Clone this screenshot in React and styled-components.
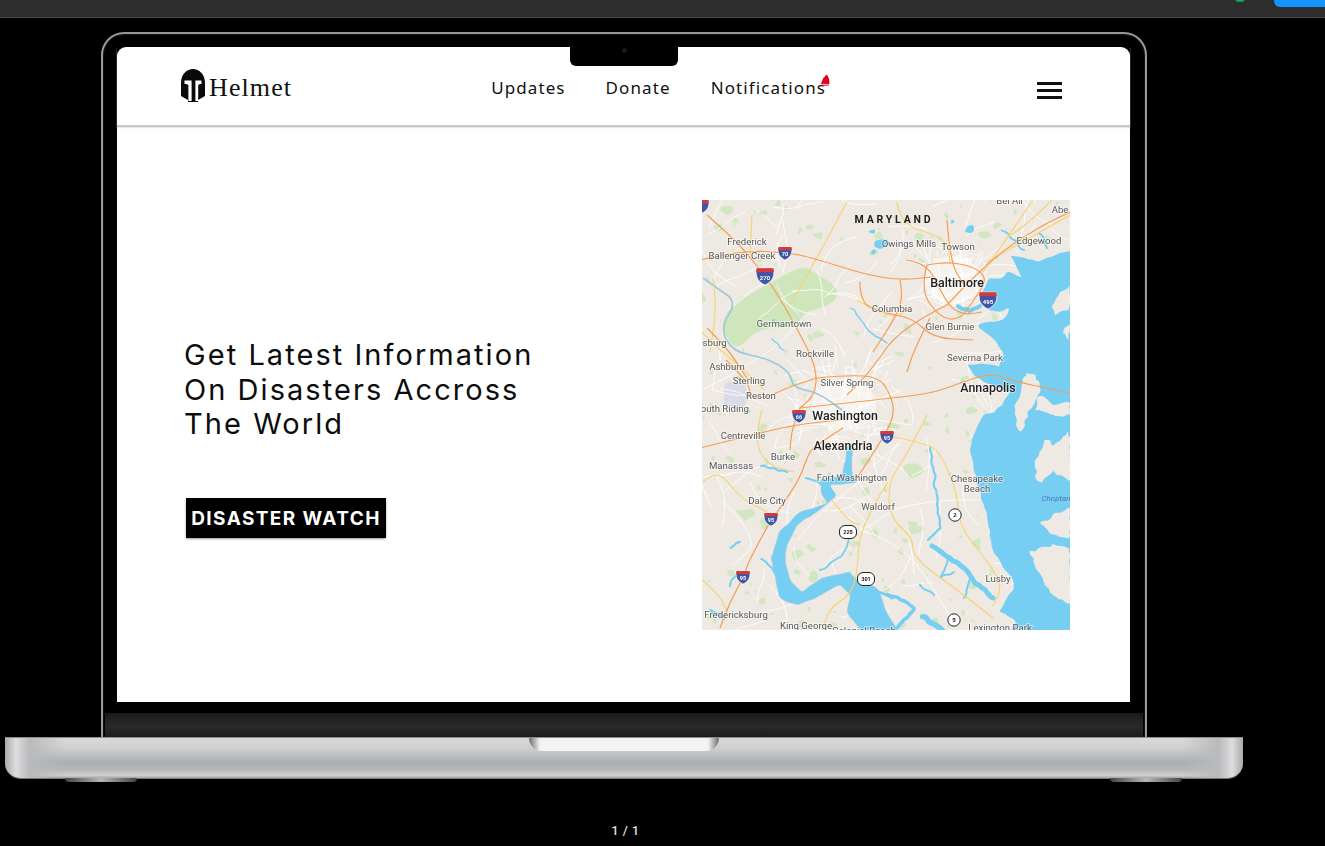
import React from "react";
import styled, { createGlobalStyle } from "styled-components";

const GlobalStyle = createGlobalStyle`
    html, body {
        margin: 0;
        padding: 0;
        background: #000000;
    }
    * {
        box-sizing: border-box;
    }
`;

const Page = styled.div`
    width: 1325px;
    height: 846px;
    overflow: hidden;
    background: #000000;
`;
const TopBar = styled.div`
    display: flex;
    justify-content: flex-end;
    align-items: flex-start;
    height: 18px;
    overflow: hidden;
    background: #2d2d2d;
    border-bottom: 1px solid #4d4d4d;
`;
const StatusDot = styled.span`
    width: 16px;
    height: 16px;
    margin: -14px 26px 0 0;
    border-radius: 50%;
    background: #18a957;
`;
const ShareButton = styled.span`
    width: 51px;
    height: 7px;
    border-radius: 0 0 0 6px;
    background: #1493ff;
`;
const Lid = styled.div`
    display: flex;
    flex-direction: column;
    width: 1046px;
    height: 706px;
    margin: 14px 0 0 101px;
    background: #000000;
    border: 2px solid #989898;
    border-bottom: 0;
    border-radius: 23px 23px 0 0;
    box-shadow: inset 0 0 2px #444444;
`;
const Screen = styled.div`
    position: relative;
    width: 1013px;
    height: 655px;
    margin: 13px 0 0 14px;
    background: #ffffff;
    border-radius: 9px 9px 0 0;
`;
const Notch = styled.div`
    position: absolute;
    top: 0;
    left: 453px;
    display: flex;
    justify-content: center;
    padding-top: 1px;
    width: 108px;
    height: 19px;
    background: #000000;
    border-radius: 0 0 6px 6px;
`;
const Camera = styled.span`
    width: 5px;
    height: 5px;
    border-radius: 50%;
    background: #0c1c2c;
`;
const Chin = styled.div`
    height: 24px;
    margin: 11px 2px 0;
    background: linear-gradient(#1a1a1a, #2a2a2a 55%, #1c1c1c);
`;
const Header = styled.header`
    display: flex;
    align-items: center;
    height: 80px;
    padding: 3px 68px 0 64px;
    border-bottom: 2px solid #c9c9c9;
    box-shadow: 0 1px 1px #e6e6e6;
`;
const Logo = styled.div`
    display: flex;
    align-items: center;
    gap: 4px;
    font-family: "Liberation Serif", serif;
    font-size: 26px;
    letter-spacing: 1.1px;
    color: #111111;
`;
const LogoMark = styled.svg`
    flex: none;
    width: 24px;
    height: 33px;
    margin-top: -5px;
`;
const Nav = styled.nav`
    display: flex;
    gap: 40px;
    margin-left: 199px;
    font-family: "Noto Sans", sans-serif;
    font-size: 17px;
    letter-spacing: 1.1px;
    color: #111111;
`;
const NavItem = styled.a`
    position: relative;
    display: block;
`;
const BellBadge = styled.svg`
    position: absolute;
    top: -1px;
    right: -4px;
    width: 10px;
    height: 11px;
`;
const MenuButton = styled.button`
    display: flex;
    flex-direction: column;
    gap: 4px;
    width: 25px;
    margin: 5px 0 0 auto;
    padding: 0;
    border: 0;
    background: none;
`;
const MenuLine = styled.span`
    display: block;
    height: 3px;
    background: #111111;
`;
const Hero = styled.section`
    display: flex;
    justify-content: space-between;
    align-items: flex-start;
    padding: 73px 60px 0 67px;
`;
const Intro = styled.div`
    padding-top: 138px;
`;
const Title = styled.h1`
    width: 400px;
    margin: 0 0 56px;
    font-family: "Inter", sans-serif;
    font-size: 29px;
    font-weight: 400;
    line-height: 34.5px;
    letter-spacing: 2.05px;
    color: #0c0c0c;
`;
const WatchButton = styled.a`
    display: flex;
    justify-content: center;
    align-items: center;
    width: 200px;
    height: 40px;
    margin-left: 2px;
    padding-top: 1px;
    background: #000000;
    box-shadow: 0 1px 2px #9a9a9a;
    font-family: "Inter", sans-serif;
    font-size: 19px;
    font-weight: 700;
    letter-spacing: 1.4px;
    color: #ffffff;
`;
const MapFrame = styled.svg`
    display: block;
    width: 368px;
    height: 430px;
    background: #efe9e3;
    filter: blur(0.3px);
`;
const MapLabel = styled.text`
    font-family: "Roboto", sans-serif;
    font-size: ${(p) => (p.$major ? "12.4px" : "9.6px")};
    font-weight: ${(p) => (p.$major ? 500 : 400)};
    fill: ${(p) => (p.$major ? "#222222" : "#585858")};
    text-anchor: middle;
    stroke: #ffffff;
    stroke-width: 2px;
    stroke-opacity: 0.5;
    paint-order: stroke;
`;
const RegionLabel = styled.text`
    font-family: "Roboto", sans-serif;
    font-size: 10.5px;
    font-weight: 700;
    letter-spacing: 2.8px;
    fill: #1c1c1c;
    text-anchor: middle;
`;
const WaterLabel = styled.text`
    font-family: "Roboto", sans-serif;
    font-size: 8px;
    font-style: italic;
    fill: #4a78c0;
    text-anchor: middle;
`;
const ShieldNumber = styled.text`
    font-family: "Roboto", sans-serif;
    font-size: ${(p) => p.$size || 5.5}px;
    font-weight: 700;
    fill: ${(p) => p.$color || "#ffffff"};
    text-anchor: middle;
`;
const Base = styled.div`
    position: relative;
    display: flex;
    justify-content: center;
    width: 1238px;
    height: 42px;
    margin: -1px 0 0 5px;
    border-radius: 0 0 16px 16px;
    border-top: 1px solid #8d8d8d;
    border-bottom: 1px solid #77777a;
    background:
        linear-gradient(90deg, #a9aaac 0, #dedee0 11px, #b9babc 24px, transparent 60px, transparent calc(100% - 60px), #b9babc calc(100% - 24px), #dedee0 calc(100% - 11px), #a9aaac 100%),
        linear-gradient(#d8d9db 0, #cfd0d2 25%, #adaeb1 60%, #b6b7b9 80%, #cfcfd1 93%, #a8a8aa 100%);
`;
const Thumb = styled.div`
    width: 190px;
    height: 13px;
    border-radius: 0 0 13px 13px;
    background: linear-gradient(90deg, #6f6f70, #f3f3f3 11px, #f3f3f3 calc(100% - 11px), #6f6f70);
`;
const Foot = styled.span`
    position: absolute;
    top: 40px;
    left: ${(p) => p.$left}px;
    width: 72px;
    height: 4px;
    border-radius: 0 0 8px 8px;
    background: linear-gradient(90deg, #444444, #b8b8b8 50%, #444444);
`;
const Pager = styled.div`
    height: 16px;
    margin-top: 44px;
    padding-right: 74px;
    text-align: center;
    font-family: "Roboto", sans-serif;
    font-size: 13px;
    font-weight: 500;
    line-height: 16px;
    letter-spacing: 0.4px;
    color: #dddddd;
`;

// map helpers: small seeded noise so the same map is drawn every time
let seed = 7;
const rnd = () => {
    seed = (seed * 9301 + 49297) % 233280;
    return seed / 233280;
};
const toPoints = (s) => {
    const n = s.trim().split(/\s+/).map(Number);
    const out = [];
    for (let i = 0; i < n.length; i += 2) out.push([n[i], n[i + 1]]);
    return out;
};
const curve = (pts, closed) => {
    const mid = (a, b) => [(a[0] + b[0]) / 2, (a[1] + b[1]) / 2];
    if (closed) {
        const start = mid(pts[pts.length - 1], pts[0]);
        let d = `M${start[0]} ${start[1]}`;
        pts.forEach((p, i) => {
            const m = mid(p, pts[(i + 1) % pts.length]);
            d += ` Q${p[0]} ${p[1]} ${m[0]} ${m[1]}`;
        });
        return d + " Z";
    }
    let d = `M${pts[0][0]} ${pts[0][1]}`;
    for (let i = 1; i < pts.length - 1; i++) {
        const m = mid(pts[i], pts[i + 1]);
        d += ` Q${pts[i][0]} ${pts[i][1]} ${m[0]} ${m[1]}`;
    }
    const last = pts[pts.length - 1];
    return d + ` L${last[0]} ${last[1]}`;
};
const jagged = (pts, amp, step, open) => {
    const out = [];
    pts.forEach((p, i) => {
        if (open && i === pts.length - 1) return;
        const q = pts[(i + 1) % pts.length];
        const parts = Math.max(1, Math.round(Math.hypot(q[0] - p[0], q[1] - p[1]) / step));
        for (let k = 0; k < parts; k++) {
            const t = k / parts;
            out.push([p[0] + (q[0] - p[0]) * t + (rnd() - 0.5) * amp, p[1] + (q[1] - p[1]) * t + (rnd() - 0.5) * amp]);
        }
    });
    if (open) out.push(pts[pts.length - 1]);
    return out;
};
const blob = (cx, cy, r) => {
    const pts = [];
    const stretch = 0.5 + rnd();
    for (let i = 0; i < 7; i++) {
        const a = (i / 7) * Math.PI * 2;
        const rr = r * (0.35 + rnd() * 1.1);
        pts.push([cx + Math.cos(a) * rr * stretch, cy + Math.sin(a) * rr]);
    }
    return curve(pts, true);
};
const wander = (x, y, parts, len) => {
    const pts = [[x, y]];
    let a = rnd() * Math.PI * 2;
    for (let i = 0; i < parts; i++) {
        a += (rnd() - 0.5) * 1.2;
        pts.push([pts[i][0] + Math.cos(a) * len, pts[i][1] + Math.sin(a) * len]);
    }
    return curve(pts);
};

const labels = [
    ["Bel Air", 308, 4], ["Abe", 358, 13], ["Ballenger Creek", 40, 59], ["Owings Mills", 207, 47],
    ["Towson", 256, 50], ["Edgewood", 337, 44], ["Columbia", 190, 112], ["Germantown", 82, 127],
    ["Glen Burnie", 248, 130], ["Leesburg", 5, 146], ["Rockville", 113, 157], ["Severna Park", 273, 161],
    ["Ashburn", 25, 170], ["Sterling", 47, 184], ["Silver Spring", 145, 186], ["Reston", 59, 199],
    ["South Riding", 20, 212], ["Centreville", 41, 239], ["Burke", 81, 260], ["Manassas", 29, 269],
    ["Fort Washington", 150, 281], ["Chesapeake", 275, 282], ["Beach", 275, 292], ["Frederick", 45, 45],
    ["Dale City", 65, 304], ["Waldorf", 176, 310], ["Lusby", 296, 382], ["Fredericksburg", 34, 418],
    ["King George", 104, 429], ["Colonial Beach", 162, 434], ["Lexington Park", 298, 431],
];
const majorLabels = [
    ["Baltimore", 255, 87], ["Annapolis", 286, 192], ["Washington", 143, 220], ["Alexandria", 141, 250],
];
const interstates = [
    ["", 0, 6, 1], ["70", 83, 53, 1], ["270", 63, 76, 1.3], ["495", 286, 100, 1.3], ["66", 97, 216, 1],
    ["95", 185, 237, 1], ["95", 69, 319, 1], ["95", 41, 377, 1],
];
const stateRoutes = [["2", 253, 315], ["5", 252, 420]];
const usRoutes = [["225", 146, 332], ["301", 164, 379]];

const park = "18 128 28 105 65 85 101 65 111 72 138 88 131 105 101 112 95 128 55 128 35 152";
const potomac = "145 245 141 275 118 280 120 295 126 303 98 312 78 332 69 358 78 398 95 405 115 397 138 385 148 395 145 412 158 430 195 430 185 412 175 388 155 380 147 372 120 378 100 392 88 380 83 358 85 345 95 325 120 308 135 295 128 285 150 283 155 282 150 275 150 245";
const bay = "368 50 345 58 335 62 322 58 308 56 314 66 320 78 305 72 298 80 286 78 281 88 278 100 283 108 296 112 308 108 300 120 275 124 285 134 294 142 301 155 298 168 283 163 265 165 272 175 283 183 300 190 309 192 300 205 292 212 281 215 272 235 268 250 272 270 277 290 284 312 288 335 292 355 305 372 313 385 305 400 298 412 315 422 300 440 380 440 380 50";
const islands = [
    "368 86 360 90 350 106 352 114 362 112 368 108",
    "368 122 362 132 368 140",
    "325 172 318 190 312 212 316 232 322 226 326 212 336 196 352 204 368 202 368 216 346 214 332 210 340 188 332 176",
    "332 262 345 238 352 246 368 232 368 282 352 272 336 284",
    "338 322 352 316 368 308 368 338 350 336",
    "328 352 351 345 368 348 368 405 351 395 332 362",
];
const orangeRoads = [
    "5 15 31 38 48 57 70 85 95 128 115 168 113 195 98 208",
    "-2 60 41 50 88 53 111 58 165 75 198 80 231 77",
    "245 105 285 62 335 28 368 12",
    "245 105 198 128 168 172 145 195",
    "198 80 201 95 195 115 171 152",
    "158 82 158 102 178 112 211 118 231 138 271 140",
    "98 208 191 198 231 193 261 182 288 173 315 182 368 193",
    "115 178 145 175 178 177 190 198 192 215 183 235 155 278",
    "68 322 48 358 41 378 28 402 18 428",
    "68 322 95 285 105 258 110 248 141 228",
    "-2 248 38 238 91 225 138 220",
    "225 65 218 90 238 118 258 120 272 100 286 78 270 66 245 62 225 65",
    "204 60 226 62 245 105 262 115 280 112",
    "98 208 90 228 88 250",
    "45 195 60 200 84 188 115 178",
    "24 160 50 185 45 200",
    "5 128 15 138 30 155 46 180",
    "245 20 248 62 262 85",
    "228 118 212 150 205 172",
];
const yellowRoads = [
    "181 235 228 243 241 258 255 292 258 328 281 355 301 385 291 406",
    "225 215 205 255 186 282 188 318 211 338 211 358 258 392 291 418",
    "186 282 158 325 155 375 148 395 128 408 121 428",
    "-2 378 18 395 25 412", "1 282 15 268 38 298 65 312",
    "145 2 115 58 88 105", "195 2 198 25 245 38 248 62",
    "331 0 305 38 281 72", "368 15 285 62", "50 15 48 57", "11 78 15 105 8 152",
    "155 100 190 120 205 110", "60 210 52 240 65 265 92 272",
    "350 0 330 20 305 38", "130 300 145 320 158 325", "-2 130 12 145 40 168 62 190",
];
const cityLines = [
    "100 170 170 200", "110 195 180 165", "120 160 130 205", "150 160 160 215", "140 215 85 160",
    "140 215 170 150", "140 215 200 190", "140 215 210 225", "230 60 270 60", "225 75 275 75",
    "235 50 240 100", "258 50 262 110", "250 85 300 45", "250 85 205 100",
    "190 310 225 300 290 300", "160 330 205 345 250 420", "20 300 60 340 30 365",
    "160 280 120 310 96 340", "0 190 60 160 100 120",
];
const creeks = [
    ["231 345 245 356 258 365 272 380 291 398", 5], ["228 248 232 275 235 305 238 328 226 340", 2.2],
    ["221 415 230 422 240 430", 5.5], ["186 395 205 402 212 408 195 428", 3.6], ["170 388 190 398", 3],
    ["150 108 165 130 185 143", 1.4], ["60 360 72 372", 2], ["35 372 28 386", 2], ["30 348 38 342", 2.2],
    ["10 410 22 418", 3], ["146 340 140 356 118 370", 1.8], ["58 265 85 272", 2.2], ["255 105 268 112 278 106", 4],
    ["246 360 238 378 252 372", 2], ["268 378 262 398", 2], ["218 385 232 395", 2], ["120 285 104 278", 2],
    ["300 30 312 40 322 50", 2], ["338 32 345 48", 2], ["70 138 82 150", 1.3],
];
const bluePatches = [[266, 30, 5], [180, 44, 5], [172, 52, 3], [170, 32, 3], [250, 22, 2.5], [72, 120, 2]];
const greens = [];
for (let i = 0; i < 240; i++) {
    greens.push(blob(rnd() * 368, rnd() * 430, 1 + rnd() * 3.6));
}
[[212, 270, 8], [44, 315, 9], [62, 322, 7], [206, 130, 7], [275, 345, 7], [95, 355, 6], [112, 378, 6], [122, 390, 5], [163, 262, 5], [60, 228, 6], [218, 36, 6], [26, 12, 6]].forEach(([x, y, r]) => greens.push(blob(x, y, r)));
const whites = [];
for (let i = 0; i < 130; i++) whites.push(wander(rnd() * 368, rnd() * 430, 3, 10 + rnd() * 10));
for (let i = 0; i < 80; i++) whites.push(wander(140 + (rnd() - 0.5) * 95, 205 + (rnd() - 0.5) * 80, 2, 6 + rnd() * 8));
for (let i = 0; i < 60; i++) whites.push(wander(250 + (rnd() - 0.5) * 70, 80 + (rnd() - 0.5) * 60, 2, 5 + rnd() * 7));
const bayPath = curve(jagged(toPoints(bay), 2.6, 5), true);
const riverPath = curve(jagged(toPoints(potomac), 1.6, 5), true);
const islandPaths = islands.map((s) => curve(jagged(toPoints(s), 4, 4), true));
const creekPaths = creeks.map(([s, w]) => [curve(jagged(toPoints(s), 3, 4, true)), w]);
const bluePaths = bluePatches.map(([x, y, r]) => blob(x, y, r));

const Interstate = ({ num, x, y, scale }) => (
    <g transform={`translate(${x} ${y}) scale(${scale})`}>
        <path d="M-6.5 -6 H6.5 C7.5 -1 6.5 4 0 7 C-6.5 4 -7.5 -1 -6.5 -6 Z" fill="#3f55a5" stroke="#ffffff" strokeWidth="0.6" />
        <path d="M-6.5 -6 H6.5 L6.8 -2.8 H-6.8 Z" fill="#d23a3c" />
        <ShieldNumber $size={scale > 1 ? 4.6 : 5.5} x="0" y="3">{num}</ShieldNumber>
    </g>
);

const MapPicture = () => (
    <MapFrame viewBox="0 0 368 430">
        <path d={curve(toPoints(park), true)} fill="#cfe6bc" />
        {greens.map((d) => <path key={d} d={d} fill="#d2e7c1" />)}
        <rect x="22" y="182" width="22" height="26" rx="6" fill="#d9dce6" />
        <ellipse cx="142" cy="205" rx="32" ry="26" fill="#f6f3ee" />
        <ellipse cx="250" cy="80" rx="28" ry="24" fill="#f6f3ee" />
        <g fill="none" stroke="#ffffff" strokeWidth="0.8">
            {whites.map((d) => <path key={d} d={d} />)}
            {cityLines.map((s) => <path key={s} d={curve(toPoints(s))} />)}
        </g>
        <path d={curve(toPoints("1 78 15 88 35 102 18 128 31 152 65 158 88 172 91 188 115 192 140 210"))} fill="none" stroke="#9ac8dc" strokeWidth="1.6" />
        <path d={riverPath} fill="#76cff2" stroke="#a6c6d6" strokeWidth="0.5" />
        <path d={bayPath} fill="#76cff2" />
        {islandPaths.map((d) => <path key={d} d={d} fill="#efe9e3" />)}
        {bluePaths.map((d) => <path key={d} d={d} fill="#76cff2" />)}
        <g fill="none" stroke="#76cff2" strokeLinecap="round">
            {creekPaths.map(([d, w]) => <path key={d} d={d} strokeWidth={w} />)}
        </g>
        <g fill="none" stroke="#f7d26e" strokeWidth="1.1">
            {yellowRoads.map((s) => <path key={s} d={curve(toPoints(s))} />)}
        </g>
        <g fill="none" stroke="#f59c52" strokeWidth="1.2">
            {orangeRoads.map((s) => <path key={s} d={curve(toPoints(s))} />)}
        </g>
        <RegionLabel x="192" y="23">MARYLAND</RegionLabel>
        {labels.map(([text, x, y]) => <MapLabel key={text} x={x} y={y}>{text}</MapLabel>)}
        {majorLabels.map(([text, x, y]) => <MapLabel key={text} $major x={x} y={y}>{text}</MapLabel>)}
        <WaterLabel x="356" y="301">Choptank</WaterLabel>
        {interstates.map(([num, x, y, scale]) => <Interstate key={`${num}-${x}`} num={num} x={x} y={y} scale={scale} />)}
        {stateRoutes.map(([num, x, y]) => (
            <g key={num}>
                <circle cx={x} cy={y} r="6.2" fill="#ffffff" stroke="#222222" strokeWidth="1" />
                <ShieldNumber $color="#222222" $size="6" x={x} y={y + 2.2}>{num}</ShieldNumber>
            </g>
        ))}
        {usRoutes.map(([num, x, y]) => (
            <g key={num}>
                <rect x={x - 8.5} y={y - 6.5} width="17" height="13" rx="5.5" fill="#ffffff" stroke="#222222" strokeWidth="1" />
                <ShieldNumber $color="#222222" $size="5.6" x={x} y={y + 2}>{num}</ShieldNumber>
            </g>
        ))}
    </MapFrame>
);

const App = () => {
    return (
        <Page>
            <GlobalStyle />
            <TopBar>
                <StatusDot />
                <ShareButton />
            </TopBar>
            <Lid>
                <Screen>
                    <Notch>
                        <Camera />
                    </Notch>
                    <Header>
                        <Logo>
                            <LogoMark viewBox="0 0 24 33">
                                <path d="M0 14 C0 5 6 0 12 0 C18 0 24 5 24 14 V27 L17 31 V33 H7 V31 L0 27 Z" fill="#0a0a0a" />
                                <path d="M3.5 11.5 H10.6 V32 H7.4 V16.5 C7.4 15 5 15 3.5 15 Z" fill="#ffffff" />
                                <path d="M20.5 11.5 H14.4 V32 H17.2 V16.5 C17.2 15 19 15 20.5 15 Z" fill="#ffffff" />
                            </LogoMark>
                            Helmet
                        </Logo>
                        <Nav>
                            <NavItem>Updates</NavItem>
                            <NavItem>Donate</NavItem>
                            <NavItem>
                                Notifications
                                <BellBadge viewBox="0 0 10 11">
                                    <path d="M0.3 8.8 C2.5 7.5 2 3.6 4.4 1.9 C6 0.9 8.4 1.6 9 3.4 C9.6 5.4 8.9 7.4 9.7 9 Z" fill="#e3001b" />
                                    <circle cx="6.5" cy="1.4" r="1.4" fill="#e3001b" />
                                    <rect x="1" y="9.6" width="8" height="1" fill="#e3001b" />
                                </BellBadge>
                            </NavItem>
                        </Nav>
                        <MenuButton>
                            <MenuLine />
                            <MenuLine />
                            <MenuLine />
                        </MenuButton>
                    </Header>
                    <Hero>
                        <Intro>
                            <Title>
                                Get Latest Information
                                <br />
                                On Disasters Accross
                                <br />
                                The World
                            </Title>
                            <WatchButton>DISASTER WATCH</WatchButton>
                        </Intro>
                        <MapPicture />
                    </Hero>
                </Screen>
                <Chin />
            </Lid>
            <Base>
                <Thumb />
                <Foot $left={60} />
                <Foot $left={1105} />
            </Base>
            <Pager>1 / 1</Pager>
        </Page>
    );
};

export default App;
